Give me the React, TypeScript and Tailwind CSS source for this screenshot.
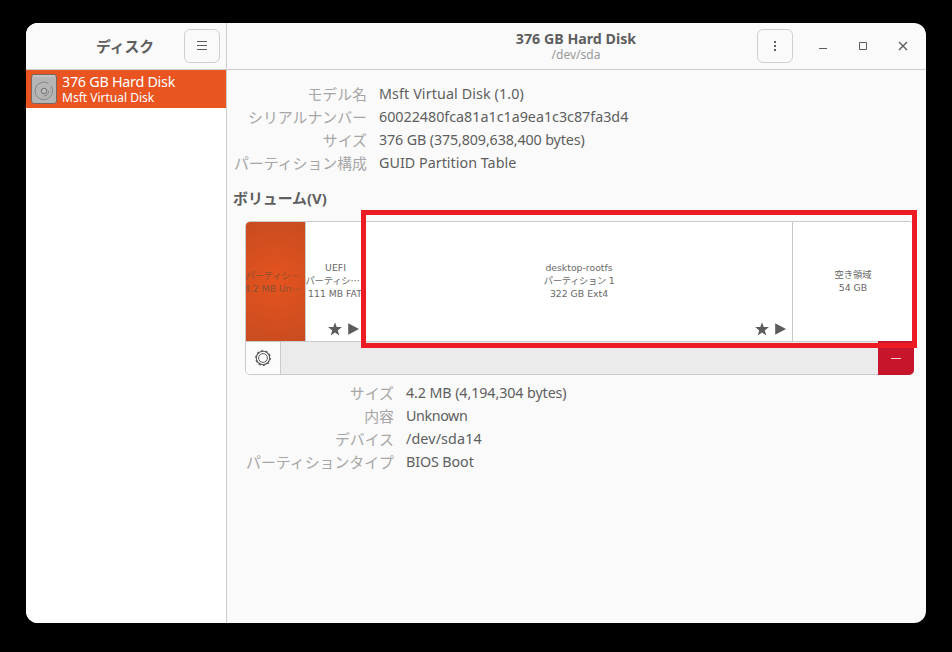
import React from "react";

type Row = { label: string; value: string; tracking: string };

const deviceRows: Row[] = [
  { label: "モデル名", value: "Msft Virtual Disk (1.0)", tracking: "tracking-[0.11px]" },
  { label: "シリアルナンバー", value: "60022480fca81a1c1a9ea1c3c87fa3d4", tracking: "tracking-[-0.01px]" },
  { label: "サイズ", value: "376 GB (375,809,638,400 bytes)", tracking: "tracking-[-0.13px]" },
  { label: "パーティション構成", value: "GUID Partition Table", tracking: "tracking-[0.03px]" },
];

const volumeRows: Row[] = [
  { label: "サイズ", value: "4.2 MB (4,194,304 bytes)", tracking: "tracking-[-0.1px]" },
  { label: "内容", value: "Unknown", tracking: "tracking-[-0.4px]" },
  { label: "デバイス", value: "/dev/sda14", tracking: "tracking-[0.13px]" },
  { label: "パーティションタイプ", value: "BIOS Boot", tracking: "tracking-[-0.1px]" },
];

function Details({ rows, labelWidth }: { rows: Row[]; labelWidth: string }) {
  return (
    <dl className="flex flex-col">
      {rows.map((row) => (
        <div key={row.label} className="flex h-[23px] items-center leading-[23px] whitespace-nowrap">
          <dt className={`${labelWidth} shrink-0 text-right font-['Noto_Sans_CJK_JP',sans-serif] text-[14.9px] text-[#a6a6a6]`}>
            {row.label}
          </dt>
          <dd className={`ml-[12px] text-[14.3px] text-[#5e5e5e] ${row.tracking}`}>
            <span>{row.value}</span>
          </dd>
        </div>
      ))}
    </dl>
  );
}

function Marks() {
  return (
    <svg className="h-[14px] w-[32px]" viewBox="0 0 32 14" fill="#5c5c5c">
      <path d="M7 0.2 8.7 5.1h5.2L9.8 8.4l1.5 5-4.3-3-4.3 3 1.5-5L0.1 5.1h5.2z" />
      <path d="M20.2 1.2 31 6.9 20.2 12.8z" />
    </svg>
  );
}

export default function App() {
  return (
    <div className="flex h-[652px] w-[952px] bg-black pt-[23px] pl-[26px] font-['Noto_Sans','Noto_Sans_CJK_JP',sans-serif]">
      <div className="flex h-[600px] w-[900px] overflow-hidden rounded-xl bg-[#fafafa]">
        <aside className="flex w-[201px] shrink-0 flex-col border-r border-[#cecece] bg-white">
          <header className="flex h-[47px] shrink-0 items-center border-b border-[#cecece] bg-[#fafafa] pl-[70px]">
            <h1 className="w-[88px] font-['Noto_Sans_CJK_JP',sans-serif] text-[14.8px] leading-[22px] font-bold text-[#5e5e5e]">ディスク</h1>
            <button className="flex h-[34px] w-9 items-center justify-center rounded-md border border-[#cfcfcf]">
              <svg className="mb-px mr-px h-[11px] w-[10px]" viewBox="0 0 10 11" stroke="#5c5c5c">
                <path d="M0 1.5h10M0 5.5h10M0 9.5h10" />
              </svg>
            </button>
          </header>
          <div className="flex h-[38px] w-[200px] items-center gap-[5px] bg-[#e95420] pl-[5px] text-white">
            <svg className="h-[30px] w-[26px]" viewBox="0 0 26 30" fill="none">
              <rect x="0.5" y="0.5" width="25" height="29" rx="2.5" fill="#b5b5b5" stroke="#77675f" />
              <path d="M2 2h22" stroke="#cfcfcf" />
              <path d="M20.1 12.2A8.7 8.7 0 1 1 17.2 9.4M17.8 16.8A5 5 0 0 1 13 22" stroke="#858585" />
              <circle cx="13" cy="17" r="2.8" stroke="#777777" />
              <circle cx="13" cy="17" r="1" fill="#cccccc" />
            </svg>
            <div className="flex flex-col whitespace-nowrap">
              <span className="-mt-px mb-px text-[14.3px] leading-[17px] tracking-[-0.25px]">376 GB Hard Disk</span>
              <span className="text-[12px] leading-[14px]">Msft Virtual Disk</span>
            </div>
          </div>
        </aside>

        <main className="flex min-w-0 flex-1 flex-col">
          <header className="flex h-[47px] shrink-0 items-center border-b border-[#cecece]">
            <div className="ml-[249px] flex w-[200px] flex-col items-center whitespace-nowrap">
              <span className="-mt-px mb-px text-[14.2px] leading-[17px] font-bold tracking-[0.02px] text-[#5e5e5e]">376 GB Hard Disk</span>
              <span className="text-[12px] leading-[14px] text-[#999999]">/dev/sda</span>
            </div>
            <button className="ml-[81px] flex h-[34px] w-9 items-center justify-center rounded-md border border-[#cfcfcf]">
              <svg className="h-[10px] w-[2px]" viewBox="0 0 2 10" fill="#5c5c5c">
                <path d="M0 0h2v2H0zM0 4h2v2H0zM0 8h2v2H0z" />
              </svg>
            </button>
            <svg className="ml-[26px] h-[10px] w-[90px]" viewBox="0 0 90 10" fill="none" stroke="#5c5c5c">
              <path d="M0 7.5h8" />
              <path d="M40.5 1.5h7v7h-7z" />
              <path d="M80 1 88 9M88 1 80 9" strokeWidth="1.4" />
            </svg>
          </header>

          <div className="flex flex-col pt-[12px] pl-[6px]">
            <Details rows={deviceRows} labelWidth="w-[134px]" />
            <h2 className="mt-[13px] text-[14.9px] leading-[22px] font-bold text-[#5e5e5e]">ボリューム(V)</h2>

            <section className="relative mt-[12px] ml-[12px] flex h-[154px] w-[669px] flex-col rounded-[5px] border border-[#cbcbcb] font-['DejaVu_Sans','Noto_Sans_CJK_JP',sans-serif] text-[9.3px] leading-[13px] text-[#686868]">
              <div className="flex h-[119px] shrink-0 overflow-hidden rounded-t-[4px] bg-white whitespace-nowrap">
                <div className="flex w-[59px] shrink-0 flex-col items-center justify-center overflow-hidden bg-[radial-gradient(circle,#e5531f_0%,#c84c20_100%)] pr-[6px] text-[#8c5130]">
                  <span className="font-['Noto_Sans_CJK_JP',sans-serif] tracking-[-0.2px]">パーティシ…</span>
                  <span className="font-['DejaVu_Sans','Noto_Sans_CJK_JP',sans-serif]">4.2 MB Un⋯</span>
                </div>
                <div className="relative flex w-[60px] shrink-0 flex-col items-center justify-center border-l border-[#cbcbcb] pb-[2px]">
                  <span>UEFI</span>
                  <span className="mr-[6px] font-['Noto_Sans_CJK_JP',sans-serif] tracking-[-0.2px]">パーティシ…</span>
                  <span className="mr-px">111 MB FAT</span>
                  <div className="absolute bottom-[5px] left-[22px]"><Marks /></div>
                </div>
                <div className="relative flex w-[428px] shrink-0 flex-col items-center justify-center border-r border-[#c6c6c9] pb-[2px] pl-px">
                  <span>desktop-rootfs</span>
                  <span className="tracking-[-0.3px]">パーティション 1</span>
                  <span>322 GB Ext4</span>
                  <div className="absolute right-[5px] bottom-[5px]"><Marks /></div>
                </div>
                <div className="flex flex-1 flex-col items-center justify-center pb-px">
                  <span>空き領域</span>
                  <span>54 GB</span>
                </div>
              </div>
              <div className="-mr-px -mb-px flex flex-1 border-t border-[#cbcbcb]">
                <button className="mb-px flex w-[35px] items-center justify-center rounded-bl-[4px] border-r border-[#cbcbcb] bg-[#fcfcfc]">
                  <svg className="mb-px h-[16px] w-[16px]" viewBox="0 0 16 16" fill="none" stroke="#5c5c5c">
                    <circle cx="8" cy="8" r="4.4" />
                    <circle cx="8" cy="8" r="6.7" strokeWidth="1.1" />
                    <circle cx="8" cy="8" r="7.3" strokeWidth="1.2" strokeDasharray="2.2 2.387" />
                  </svg>
                </button>
                <div className="mb-px flex-1 bg-[#ebebeb]" />
                <button className="-mt-px flex w-9 items-center justify-center rounded-br-[5px] bg-[#c7162b]">
                  <span className="h-px w-[10px] bg-[#f6c9cf]" />
                </button>
              </div>
              <div className="pointer-events-none absolute -top-[12px] left-[115px] h-[138px] w-[556px] border-5 border-[#ed1c24]" />
            </section>

            <div className="mt-[6px] ml-[12px]">
              <Details rows={volumeRows} labelWidth="w-[149px]" />
            </div>
          </div>
        </main>
      </div>
    </div>
  );
}
